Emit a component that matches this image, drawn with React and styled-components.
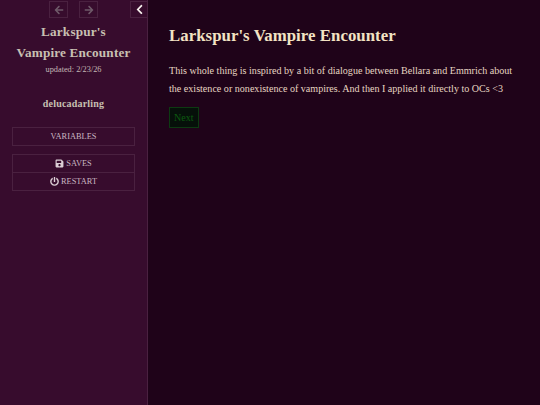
import React from "react";
import styled, { createGlobalStyle } from "styled-components";
import { FaArrowLeft, FaArrowRight, FaChevronLeft, FaSave, FaPowerOff } from "react-icons/fa";

const GlobalStyle = createGlobalStyle`
  html, body {
    margin: 0;
    padding: 0;
    height: 100%;
    background: #1f0319;
  }
  #root {
    height: 100%;
  }
  * {
    box-sizing: border-box;
  }
`;

const Page = styled.div`
  display: flex;
  width: 540px;
  height: 405px;
  overflow: hidden;
  font-family: "Liberation Serif", "Times New Roman", serif;
`;

const Sidebar = styled.aside`
  position: relative;
  flex: 0 0 148px;
  padding: 0 12px;
  background: #370c2d;
  border-right: 1px solid #4a2140;
  color: #c9bfb4;
`;

const HistoryNav = styled.nav`
  display: flex;
  gap: 11px;
  padding: 1px 0 0 37px;
`;

const NavButton = styled.button`
  display: flex;
  align-items: center;
  justify-content: center;
  width: 19px;
  height: 17px;
  padding: 0;
  background: transparent;
  border: 1px solid #4a2140;
  color: #6f5a69;
  font-size: 10px;
`;

const Stow = styled.button`
  position: absolute;
  top: 1px;
  right: -1px;
  display: flex;
  align-items: center;
  justify-content: center;
  width: 18px;
  height: 17px;
  padding: 0;
  background: #370c2d;
  border: 1px solid #4a2140;
  color: #f8f3ee;
  font-size: 11px;
`;

const StoryTitle = styled.h1`
  margin: 3px 0 0;
  font-size: 13.2px;
  line-height: 21px;
  font-weight: bold;
  letter-spacing: 0.18px;
  text-align: center;
  color: #c8c0b2;
`;

const Updated = styled.div`
  margin-top: 1px;
  font-size: 8.3px;
  line-height: 11px;
  text-align: center;
  color: #c4b8b6;
`;

const Author = styled.div`
  margin-top: 22px;
  font-size: 10px;
  line-height: 13px;
  font-weight: bold;
  letter-spacing: 0.2px;
  text-align: center;
  color: #c8c0b2;
`;

const MenuGroup = styled.div`
  display: flex;
  flex-direction: column;
  margin-top: ${({ $gap }) => $gap}px;
`;

const MenuItem = styled.button`
  display: flex;
  align-items: center;
  justify-content: center;
  gap: 2px;
  height: 19px;
  margin-top: -1px;
  padding: 0;
  background: transparent;
  border: 1px solid #4a2140;
  font-family: inherit;
  font-size: 8.4px;
  color: #c9b6c1;

  svg {
    font-size: 9px;
    color: #dccfd6;
  }
`;

const Main = styled.main`
  flex: 1;
  padding: 26px 20px 0 21px;
  background: #1f0319;
  color: #e0cdb8;
`;

const PassageTitle = styled.h2`
  margin: 0;
  font-size: 16.8px;
  line-height: 19px;
  font-weight: bold;
  letter-spacing: 0.05px;
  color: #f3e3c4;
`;

const Body = styled.p`
  margin: 17px 0 0;
  font-size: 10.08px;
  line-height: 17.6px;
  color: #e6d5c1;
`;

const NextLink = styled.a`
  display: inline-block;
  margin-top: 10px;
  padding: 0 4px;
  height: 21px;
  line-height: 19px;
  border: 1px solid #0d3a12;
  background: #06100a;
  font-size: 10.08px;
  color: #0c5a10;
`;

export default function App() {
  return (
    <>
      <GlobalStyle />
      <Page>
        <Sidebar>
          <HistoryNav>
            <NavButton><FaArrowLeft /></NavButton>
            <NavButton><FaArrowRight /></NavButton>
          </HistoryNav>
          <Stow><FaChevronLeft /></Stow>
          <StoryTitle>Larkspur's<br />Vampire Encounter</StoryTitle>
          <Updated>updated: 2/23/26</Updated>
          <Author>delucadarling</Author>
          <MenuGroup $gap={18}>
            <MenuItem>VARIABLES</MenuItem>
          </MenuGroup>
          <MenuGroup $gap={9}>
            <MenuItem><FaSave />SAVES</MenuItem>
            <MenuItem><FaPowerOff />RESTART</MenuItem>
          </MenuGroup>
        </Sidebar>
        <Main>
          <PassageTitle>Larkspur's Vampire Encounter</PassageTitle>
          <Body>
            This whole thing is inspired by a bit of dialogue between Bellara and Emmrich about the existence or nonexistence of vampires. And then I applied it directly to OCs &lt;3
          </Body>
          <NextLink>Next</NextLink>
        </Main>
      </Page>
    </>
  );
}
